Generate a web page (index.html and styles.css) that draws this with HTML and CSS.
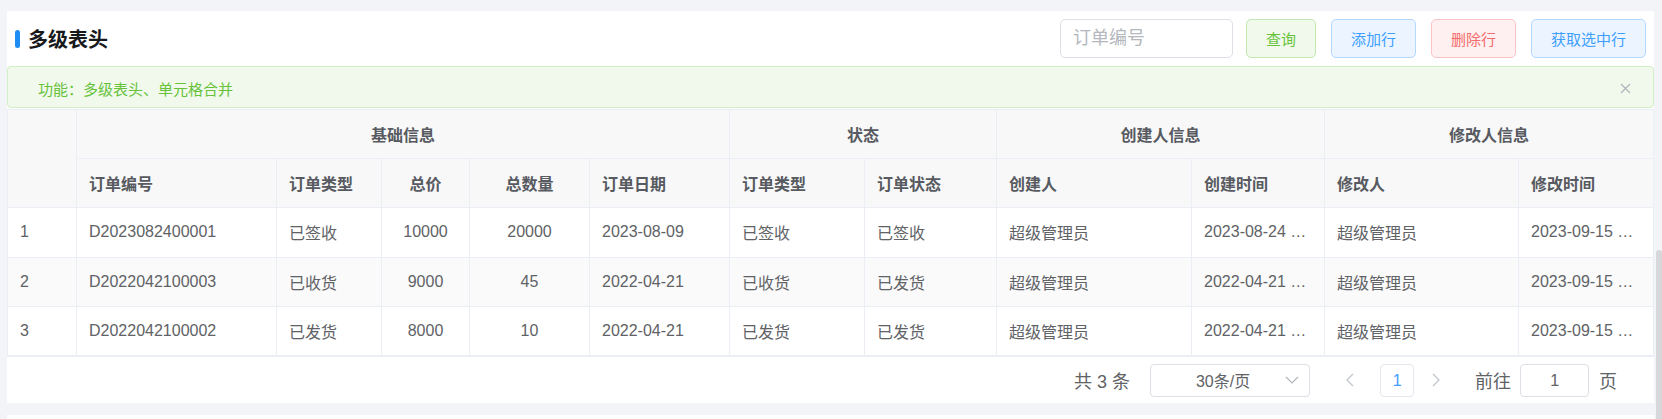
FILE: index.html
```html
<!DOCTYPE html>
<html>
<head>
    <meta charset="utf-8">
    <link rel="stylesheet" href="styles.css">
</head>
<body>
    <div class="page">
        <section class="card">
            <div class="card-head">
                <div class="title">
                    <span class="title-bar"></span>
                    <span>多级表头</span>
                </div>
                <div class="toolbar">
                    <div class="search-input">订单编号</div>
                    <button class="btn btn-success">查询</button>
                    <button class="btn btn-primary">添加行</button>
                    <button class="btn btn-danger">删除行</button>
                    <button class="btn btn-primary">获取选中行</button>
                </div>
            </div>

            <div class="alert">
                <span class="alert-text">功能：多级表头、单元格合并</span>
                <svg class="alert-close" width="11" height="11" viewBox="0 0 11 11">
                    <path d="M1 1 L10 10 M10 1 L1 10" stroke="#b1b4ba" stroke-width="1.2" fill="none"/>
                </svg>
            </div>

            <table class="grid">
                <colgroup>
                    <col class="col-idx">
                    <col class="col-no">
                    <col class="col-type">
                    <col class="col-price">
                    <col class="col-qty">
                    <col class="col-date">
                    <col class="col-stype">
                    <col class="col-status">
                    <col class="col-creator">
                    <col class="col-ctime">
                    <col class="col-modifier">
                    <col class="col-mtime">
                </colgroup>
                <thead>
                    <tr class="head-row">
                        <th rowspan="2"></th>
                        <th colspan="5" class="center">基础信息</th>
                        <th colspan="2" class="center">状态</th>
                        <th colspan="2" class="center">创建人信息</th>
                        <th colspan="2" class="center">修改人信息</th>
                    </tr>
                    <tr class="head-row">
                        <th>订单编号</th>
                        <th>订单类型</th>
                        <th class="center">总价</th>
                        <th class="center">总数量</th>
                        <th>订单日期</th>
                        <th>订单类型</th>
                        <th>订单状态</th>
                        <th>创建人</th>
                        <th>创建时间</th>
                        <th>修改人</th>
                        <th>修改时间</th>
                    </tr>
                </thead>
                <tbody>
                    <tr>
                        <td>1</td>
                        <td>D2023082400001</td>
                        <td>已签收</td>
                        <td class="center">10000</td>
                        <td class="center">20000</td>
                        <td>2023-08-09</td>
                        <td>已签收</td>
                        <td>已签收</td>
                        <td>超级管理员</td>
                        <td>2023-08-24 10:21:36</td>
                        <td>超级管理员</td>
                        <td>2023-09-15 16:42:08</td>
                    </tr>
                    <tr>
                        <td>2</td>
                        <td>D2022042100003</td>
                        <td>已收货</td>
                        <td class="center">9000</td>
                        <td class="center">45</td>
                        <td>2022-04-21</td>
                        <td>已收货</td>
                        <td>已发货</td>
                        <td>超级管理员</td>
                        <td>2022-04-21 14:05:51</td>
                        <td>超级管理员</td>
                        <td>2023-09-15 16:42:08</td>
                    </tr>
                    <tr>
                        <td>3</td>
                        <td>D2022042100002</td>
                        <td>已发货</td>
                        <td class="center">8000</td>
                        <td class="center">10</td>
                        <td>2022-04-21</td>
                        <td>已发货</td>
                        <td>已发货</td>
                        <td>超级管理员</td>
                        <td>2022-04-21 13:58:17</td>
                        <td>超级管理员</td>
                        <td>2023-09-15 16:42:08</td>
                    </tr>
                </tbody>
            </table>

            <div class="pager">
                <span class="pager-total">共 3 条</span>
                <div class="pager-size">
                    <span class="pager-size-text">30条/页</span>
                    <svg width="14" height="8" viewBox="0 0 14 8">
                        <path d="M1 1 L7 7 L13 1" stroke="#b4b7bd" stroke-width="1.2" fill="none"/>
                    </svg>
                </div>
                <span class="pager-arrow pager-prev">
                    <svg width="8" height="14" viewBox="0 0 8 14">
                        <path d="M7 1 L1 7 L7 13" stroke="#c0c4cc" stroke-width="1.2" fill="none"/>
                    </svg>
                </span>
                <span class="pager-num">1</span>
                <span class="pager-arrow">
                    <svg width="8" height="14" viewBox="0 0 8 14">
                        <path d="M1 1 L7 7 L1 13" stroke="#c0c4cc" stroke-width="1.2" fill="none"/>
                    </svg>
                </span>
                <span class="pager-goto">前往</span>
                <div class="pager-input">1</div>
                <span class="pager-unit">页</span>
            </div>
        </section>

        <section class="card card-next"></section>
    </div>
    <div class="scrollbar">
        <div class="scrollbar-thumb"></div>
    </div>
</body>
</html>
```

FILE: styles.css
```css
* {
    box-sizing: border-box;
}

html,
body {
    margin: 0;
    height: 100%;
    overflow: hidden;
}

body {
    display: flex;
    background: #f2f4f8;
    font-family: "Liberation Sans", "Noto Sans CJK SC", sans-serif;
    color: #606266;
}

.page {
    flex: 1;
    padding: 11px 2px 0 7px;
}

.scrollbar {
    width: 7px;
    padding-top: 250px;
}

.scrollbar-thumb {
    height: 200px;
    background: #d5d7db;
    border-radius: 4px 4px 0 0;
}

.card {
    background: #fff;
}

.card-next {
    margin-top: 12px;
    height: 80px;
}

/* header */
.card-head {
    height: 55px;
    display: flex;
    align-items: center;
    padding: 0 8px;
}

.title {
    flex: 1;
    display: flex;
    align-items: center;
    gap: 8px;
    font-size: 20px;
    font-weight: 700;
    color: #17191c;
}

.title-bar {
    width: 5px;
    height: 18px;
    border-radius: 3px;
    background: #1e8cf5;
}

.toolbar {
    display: flex;
    align-items: center;
}

.search-input {
    width: 173px;
    height: 39px;
    border: 1px solid #dcdfe6;
    border-radius: 5px;
    padding-left: 12px;
    margin-right: 13px;
    font-size: 18px;
    line-height: 37px;
    color: #b4b7bd;
}

.btn {
    height: 39px;
    padding: 0 19px;
    margin-left: 15px;
    border: 1px solid;
    border-radius: 5px;
    font-family: inherit;
    font-size: 15px;
    cursor: pointer;
}

.toolbar .search-input + .btn {
    margin-left: 0;
}

.btn-success {
    background: #f0f9eb;
    border-color: #c2e7b0;
    color: #67c23a;
}

.btn-primary {
    background: #ecf5ff;
    border-color: #b3d8ff;
    color: #409eff;
}

.btn-danger {
    background: #fef0f0;
    border-color: #fbc4c4;
    color: #f56c6c;
}

/* alert */
.alert {
    height: 42px;
    display: flex;
    align-items: center;
    padding: 3px 22px 0 30px;
    background: #f0f9eb;
    border: 1px solid #d2eec3;
    border-radius: 4px;
    font-size: 15px;
    color: #67c23a;
}

.alert-text {
    flex: 1;
}

/* table */
.grid {
    width: 100%;
    margin-top: 1px;
    table-layout: fixed;
    border-collapse: collapse;
    font-size: 16px;
}

.col-idx { width: 69px; }
.col-no { width: 200px; }
.col-type { width: 105px; }
.col-price { width: 88px; }
.col-qty { width: 120px; }
.col-date { width: 140px; }
.col-stype { width: 135px; }
.col-status { width: 132px; }
.col-creator { width: 195px; }
.col-ctime { width: 133px; }
.col-modifier { width: 194px; }
.col-mtime { width: 135px; }

.grid th,
.grid td {
    border: 1px solid #ebeef5;
    padding: 0 12px;
    text-align: left;
    white-space: nowrap;
    overflow: hidden;
    text-overflow: ellipsis;
}

.grid th {
    background: #f8f8f9;
    font-weight: 700;
    color: #575a60;
}

.grid .center {
    text-align: center;
}

.grid .head-row {
    height: 49px;
}

.grid tbody tr {
    height: 49.5px;
}

.grid tbody tr:nth-child(2) {
    background: #fafafa;
}

.grid tbody tr:last-child td {
    border-bottom: 2px solid #ebeef5;
}

/* pagination */
.pager {
    height: 46px;
    display: flex;
    align-items: center;
    justify-content: flex-end;
    padding-right: 37px;
    font-size: 18px;
    color: #606266;
}

.pager-total {
    margin-right: 20px;
}

.pager-size {
    width: 160px;
    height: 33px;
    display: flex;
    align-items: center;
    padding: 0 10px;
    border: 1px solid #dcdfe6;
    border-radius: 4px;
    font-size: 16px;
}

.pager-size-text {
    flex: 1;
    text-align: center;
}

.pager-arrow {
    width: 30px;
    height: 33px;
    display: flex;
    align-items: center;
    justify-content: center;
}

.pager-prev {
    margin-left: 25px;
}

.pager-num {
    width: 34px;
    height: 33px;
    margin: 0 7px 0 15px;
    border: 1px solid #e4e7ed;
    border-radius: 4px;
    text-align: center;
    font-size: 16px;
    line-height: 31px;
    color: #409eff;
}

.pager-goto {
    margin-left: 24px;
    margin-right: 9px;
}

.pager-input {
    width: 69px;
    height: 33px;
    border: 1px solid #dcdfe6;
    border-radius: 4px;
    text-align: center;
    font-size: 16px;
    line-height: 31px;
    margin-right: 10px;
}
```
